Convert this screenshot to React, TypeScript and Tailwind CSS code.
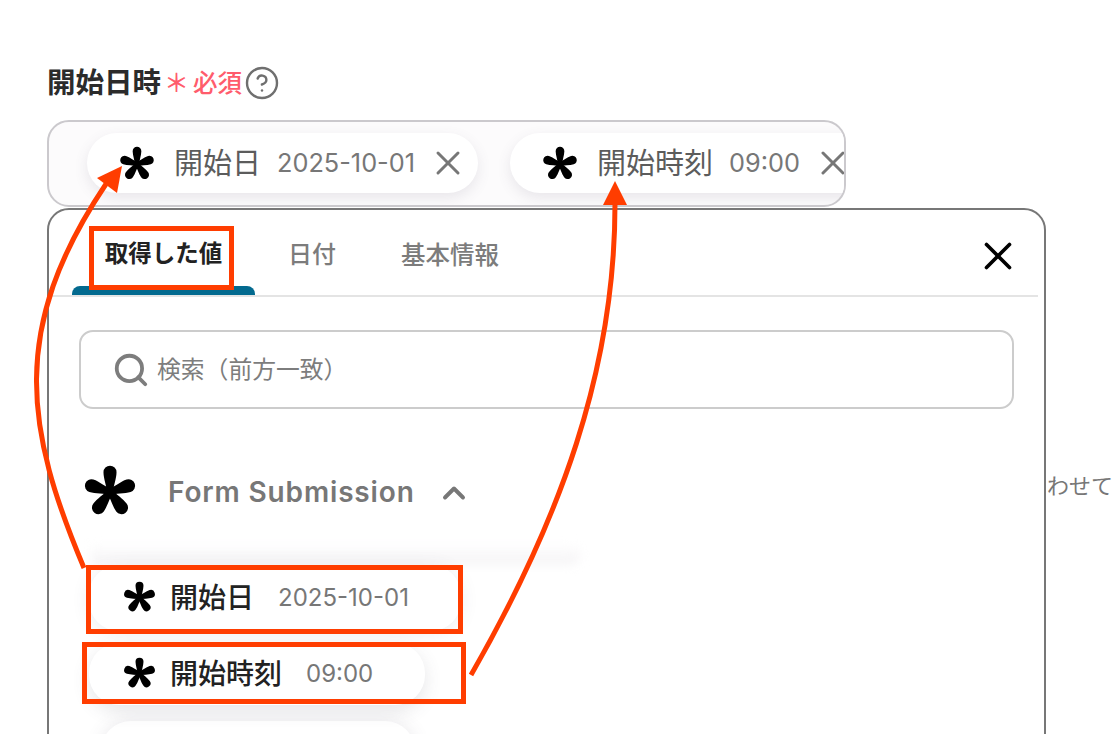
import { CircleHelp, ChevronUp, Search, X } from 'lucide-react';

function Asterisk({ className }: { className: string }) {
  const petals = [0, 72, 144, 216, 288];
  return (
    <svg className={className} viewBox="0 0 24 24" fill="#000">
      {petals.map((deg) => (
        <path
          key={deg}
          transform={`rotate(${deg} 12 12.8)`}
          d="M10.8 14C10.6 10.5 9.1 6.8 9.1 4.1A2.9 2.9 0 0 1 14.9 4.1C14.9 6.8 13.4 10.5 13.2 14Z"
        />
      ))}
    </svg>
  );
}

function InputChip({ label, value, className }: { label: string; value: string; className: string }) {
  return (
    <div className={`flex h-[60px] shrink-0 items-center rounded-[30px] bg-white shadow-[0_5px_14px_rgba(90,80,110,0.12)] ${className}`}>
      <Asterisk className="ml-[32px] h-[36px] w-[36px] shrink-0" />
      <span className="ml-[19px] whitespace-nowrap text-[29px] leading-none text-[#5c5c5c]">{label}</span>
      <span className="ml-[16px] whitespace-nowrap text-[25.3px] leading-none text-[#777]">{value}</span>
      <X className="ml-[13px] h-[40px] w-[40px] shrink-0 text-[#777]" strokeWidth={1.8} />
    </div>
  );
}

function ListChip({ label, value, className }: { label: string; value: string; className: string }) {
  return (
    <div className={`flex items-center rounded-[30px] bg-white ${className}`}>
      <Asterisk className="mb-[4px] ml-[34px] h-[33px] w-[33px] shrink-0" />
      <span className="ml-[14px] whitespace-nowrap text-[28px] font-medium leading-none text-[#222]">{label}</span>
      <span className="ml-[24px] whitespace-nowrap text-[24px] leading-none text-[#777]">{value}</span>
    </div>
  );
}

export default function App() {
  return (
    <div className="relative h-[734px] w-[1114px] overflow-hidden bg-white font-['Inter','Noto_Sans_CJK_JP',sans-serif]">
      <div className="px-[47px] pt-[68px]">
        <div className="flex h-[30px] items-center">
          <span className="text-[28.5px] font-semibold leading-none text-[#2b2b2b]">開始日時</span>
          <span className="ml-[3px] text-[25px] font-medium leading-none text-[#ff5c6c]">＊</span>
          <span className="ml-[4px] text-[24.5px] font-medium leading-none text-[#ff5c6c]">必須</span>
          <CircleHelp className="ml-[2px] h-[36px] w-[36px] text-[#6f6f6f]" strokeWidth={1.6} />
        </div>

        <div className="mt-[22px] flex h-[87px] w-[799px] items-center overflow-hidden rounded-[22px] border-2 border-[#cbc9cd] bg-[#fcfbfc] pb-[1px] pl-[38px]">
          <InputChip label="開始日" value="2025-10-01" className="w-[391px]" />
          <InputChip label="開始時刻" value="09:00" className="ml-[32px] w-[400px]" />
        </div>

        <div className="mt-[1px] flex">
          <div className="h-[540px] w-[999px] shrink-0 overflow-hidden rounded-t-[22px] border-2 border-[#777] bg-white">
            <div className="mr-[6px] flex h-[87px] items-end border-b-2 border-[#e4e4e4]">
              <div className="ml-[23px] flex h-[78px] w-[183px] flex-col items-center justify-between">
                <span className="mt-[25px] text-[23.5px] font-semibold leading-none text-[#222]">取得した値</span>
                <div className="h-[9px] w-full rounded-t-[8px] bg-[#036a8f]" />
              </div>
              <span className="mb-[28px] ml-[33px] text-[24px] font-medium leading-none text-[#7c7c7c]">日付</span>
              <span className="mb-[28px] ml-[65px] text-[24.5px] font-medium leading-none text-[#7c7c7c]">基本情報</span>
              <X className="mb-[16px] ml-auto mr-[17px] h-[46px] w-[46px] text-black" strokeWidth={1.9} />
            </div>

            <div className="ml-[30px] mt-[33px] flex h-[79px] w-[935px] items-center rounded-[14px] border-2 border-[#cccccc]">
              <Search className="ml-[31px] h-[38px] w-[38px] text-[#7d7d7d]" strokeWidth={2.4} />
              <span className="ml-[7px] text-[23.8px] leading-none text-[#7d7d7d]">検索（前方一致）</span>
            </div>

            <div className="ml-[34px] mt-[56px] flex h-[54px] items-center">
              <Asterisk className="mb-[4px] h-[54px] w-[54px] shrink-0" />
              <span className="ml-[31px] text-[28px] font-semibold leading-none tracking-[0.85px] text-[#777]">Form Submission</span>
              <ChevronUp className="ml-[21px] mt-[2px] h-[36px] w-[36px] text-[#777]" strokeWidth={2.6} />
            </div>

            {/* soft band left by the scrolled list behind the first row */}
            <div className="ml-[42px] mt-[24px] h-[22px] w-[490px] rounded-r-[16px] bg-linear-to-b from-white to-[#f4f3f5] blur-[5px]" />
            <ListChip
              label="開始日"
              value="2025-10-01"
              className="relative ml-[40px] h-[66px] w-[372px] shadow-[0_2px_18px_rgba(80,75,95,0.1)]"
            />
            <ListChip
              label="開始時刻"
              value="09:00"
              className="relative ml-[40px] mt-[12px] h-[62px] w-[336px] shadow-[0_6px_18px_rgba(80,75,95,0.14)]"
            />
            <div className="ml-[52px] mt-[16px] h-[60px] w-[314px] rounded-[30px] bg-white shadow-[0_0_18px_rgba(80,75,95,0.12)]" />
          </div>
          <span className="ml-[1px] mt-[267px] whitespace-nowrap text-[22px] leading-none text-[#777]">わせて</span>
        </div>
      </div>

      {/* annotations drawn on top of the screenshot */}
      <div className="absolute left-[89px] top-[226px] h-[64px] w-[145px] border-[5px] border-[#ff3d00]" />
      <div className="absolute left-[86px] top-[565px] h-[69px] w-[377px] border-[5px] border-[#ff3d00]" />
      <div className="absolute left-[82px] top-[642px] h-[62px] w-[384px] border-[5px] border-[#ff3d00]" />
      <svg className="absolute left-0 top-0" width="1114" height="734" fill="none">
        <path d="M84 568C26 430 8 330 106 184" stroke="#ff3d00" strokeWidth="5" />
        <path d="M122 166L97 178L117 193Z" fill="#ff3d00" />
        <path d="M471 675C560 520 615 370 615 204" stroke="#ff3d00" strokeWidth="5" />
        <path d="M615 181L603 205L627 205Z" fill="#ff3d00" />
      </svg>
    </div>
  );
}
